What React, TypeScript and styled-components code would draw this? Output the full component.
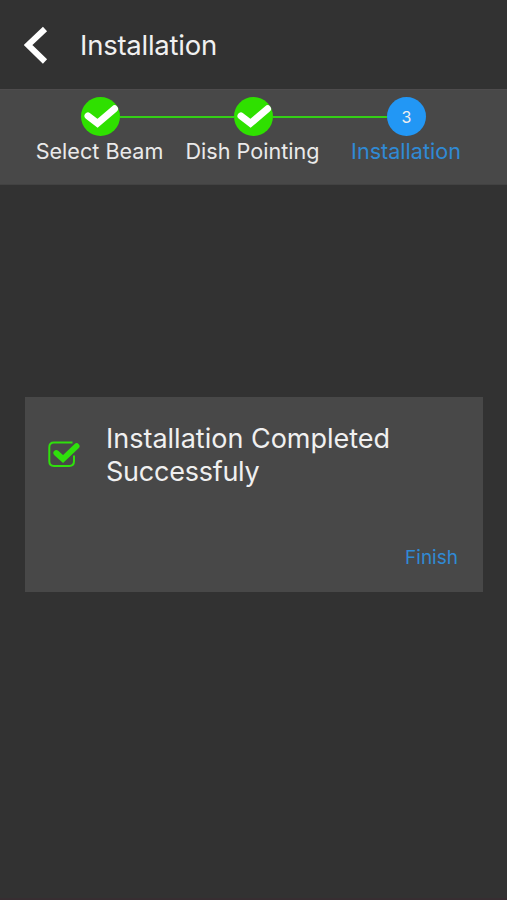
import React from "react";
import styled, { createGlobalStyle } from "styled-components";

const GlobalStyle = createGlobalStyle`
  * { box-sizing: border-box; }
  body {
    margin: 0;
    background: #323232;
    color: #f0f0f0;
    font-family: Inter, "Liberation Sans", sans-serif;
  }
`;

const Screen = styled.main`
  width: 100%;
  height: 100vh;
  min-height: 900px;
  display: flex;
  flex-direction: column;
  background: #323232;
  border-bottom: 2px solid #372d31;
`;

const Header = styled.header`
  height: 89px;
  display: flex;
  align-items: center;
  padding-left: 24px;
`;

const BackButton = styled.button`
  width: 24px;
  height: 38px;
  margin: 1px 32px 0 0;
  padding: 0;
  border: 0;
  background: none;
  svg { display: block; }
`;

const Title = styled.h1`
  margin: 1px 0 0;
  font-size: 27.5px;
  font-weight: 400;
  line-height: 34px;
  letter-spacing: -0.25px;
`;

const Stepper = styled.ol`
  height: 96px;
  margin: 0;
  padding: 7px 24px 0;
  display: grid;
  grid-template-columns: repeat(3, 153px);
  list-style: none;
  background: #484848;
  border-top: 1px solid #4e4c4d;
  border-bottom: 1px solid #424242;
`;

const Step = styled.li`
  display: flex;
  flex-direction: column;
  align-items: center;
`;

const Track = styled.div`
  width: 100%;
  display: flex;
  align-items: center;
`;

const Line = styled.span<{ $visible: boolean }>`
  flex: 1;
  height: 2px;
  margin-top: 1px;
  background: ${({ $visible }) => ($visible ? "#34cf16" : "transparent")};
`;

const Marker = styled.span<{ $done: boolean }>`
  width: 39px;
  height: 39px;
  border-radius: 50%;
  display: flex;
  align-items: center;
  justify-content: center;
  background: ${({ $done }) => ($done ? "#2fe000" : "#2297f5")};
  font-size: 16px;
  font-weight: 400;
`;

const StepLabel = styled.span<{ $active: boolean }>`
  margin: 1px ${({ $active }) => ($active ? "1px" : "2px")} 0 0;
  font-size: 21.6px;
  line-height: 28px;
  white-space: nowrap;
  color: ${({ $active }) => ($active ? "#308ad5" : "#eaeaea")};
`;

const Content = styled.section`
  flex: 1;
  padding: 212px 24px 0 25px;
`;

const Card = styled.article`
  height: 195px;
  padding: 25px 25px 19px 23px;
  display: flex;
  flex-direction: column;
  justify-content: space-between;
  background: #484848;
`;

const Message = styled.div`
  display: flex;
  align-items: flex-start;
  gap: 25px;
  svg { flex: none; margin-top: 18px; }
`;

const MessageText = styled.p`
  margin: 0;
  width: 300px;
  font-size: 27px;
  line-height: 33px;
`;

const SecondLine = styled.span`
  display: block;
  letter-spacing: -0.25px;
`;

const FinishButton = styled.button`
  align-self: flex-end;
  padding: 0;
  border: 0;
  background: none;
  color: #308ad5;
  font: 400 19px/30px Inter, sans-serif;
`;

const CheckMark = () => (
  <svg width="39" height="39" viewBox="0 0 39 39" fill="none">
    <path d="M7 19 L16.5 26.3 L33.5 11.8" stroke="#fff" strokeWidth="7" strokeLinecap="round" />
  </svg>
);

const steps = [
  { label: "Select Beam", done: true },
  { label: "Dish Pointing", done: true },
  { label: "Installation", done: false },
];

export default function App() {
  return (
    <>
      <GlobalStyle />
      <Screen>
        <Header>
          <BackButton aria-label="Back">
            <svg width="24" height="38" viewBox="0 0 24 38" fill="none">
              <path d="M21 3 L4 19 L21 35.5" stroke="#fff" strokeWidth="6" />
            </svg>
          </BackButton>
          <Title>Installation</Title>
        </Header>
        <Stepper>
          {steps.map(({ label, done }, i) => (
            <Step key={label}>
              <Track>
                <Line $visible={i > 0} />
                <Marker $done={done}>{done ? <CheckMark /> : i + 1}</Marker>
                <Line $visible={i < steps.length - 1} />
              </Track>
              <StepLabel $active={!done}>{label}</StepLabel>
            </Step>
          ))}
        </Stepper>
        <Content>
          <Card>
            <Message>
              <svg width="33" height="28" viewBox="0 0 33 28" fill="none" stroke="#2fe00c">
                <path d="M24.5 2.5 H6 Q1.3 2.5 1.3 7.2 V21.3 Q1.3 26 6 26 H21.3 Q26 26 26 21.3 V15.5" strokeWidth="2" />
                <path d="M8.3 13 L15 19 L28.6 6.2" strokeWidth="5.8" strokeLinecap="round" />
              </svg>
              <MessageText>
                Installation Completed <SecondLine>Successfuly</SecondLine>
              </MessageText>
            </Message>
            <FinishButton>Finish</FinishButton>
          </Card>
        </Content>
      </Screen>
    </>
  );
}
